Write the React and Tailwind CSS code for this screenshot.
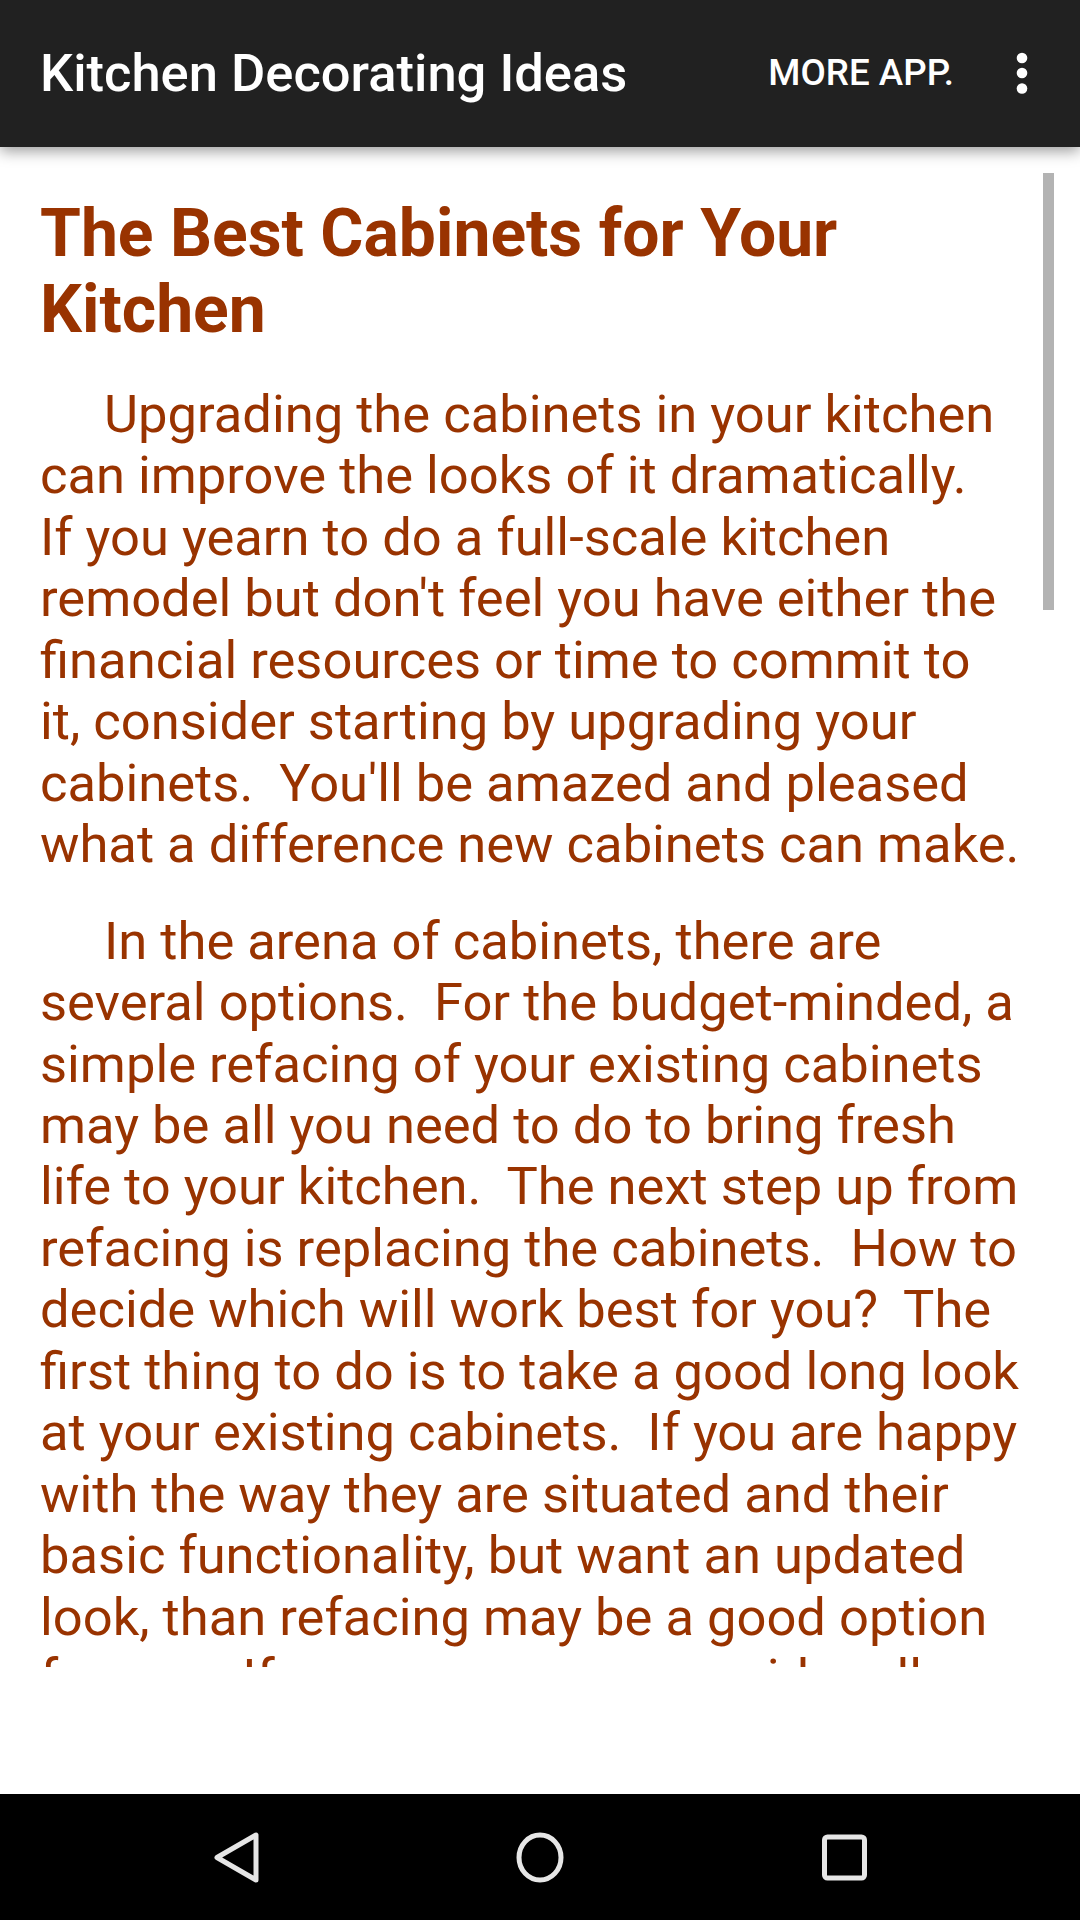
import React from "react";

const P1 = [
  "Upgrading the cabinets in your kitchen",
  "can improve the looks of it dramatically.",
  "If you yearn to do a full-scale kitchen",
  "remodel but don't feel you have either the",
  "financial resources or time to commit to",
  "it, consider starting by upgrading your",
  "cabinets.  You'll be amazed and pleased",
  "what a difference new cabinets can make.",
];

const P2 = [
  "In the arena of cabinets, there are",
  "several options.  For the budget-minded, a",
  "simple refacing of your existing cabinets",
  "may be all you need to do to bring fresh",
  "life to your kitchen.  The next step up from",
  "refacing is replacing the cabinets.  How to",
  "decide which will work best for you?  The",
  "first thing to do is to take a good long look",
  "at your existing cabinets.  If you are happy",
  "with the way they are situated and their",
  "basic functionality, but want an updated",
  "look, than refacing may be a good option",
  "for you.  If you are unsure, consider all",
];

function Lines({ lines }) {
  return lines.map((l, i) => (
    <React.Fragment key={i}>
      {l}
      {i < lines.length - 1 && <br />}
    </React.Fragment>
  ));
}

export default function App() {
  return (
    <div className="w-[1080px] h-[1920px] flex flex-col bg-white font-['Roboto','Liberation_Sans',sans-serif] overflow-hidden">
      <header className="relative z-10 h-[147px] shrink-0 bg-[#212121] flex items-center shadow-[0_4px_14px_rgba(0,0,0,0.4)]">
        <div className="flex-1 pl-[40px] text-white text-[52.5px] font-medium leading-none">
          Kitchen Decorating Ideas
        </div>
        <div className="text-white text-[36.75px] font-medium leading-none mr-[43px]">MORE APP.</div>
        <div className="w-[50px] mr-[33px] flex items-center justify-center">
          <svg width="12" height="44" viewBox="0 0 12 44">
            <circle cx="6" cy="6" r="5.3" fill="#fff" />
            <circle cx="6" cy="21" r="5.3" fill="#fff" />
            <circle cx="6" cy="36.5" r="5.3" fill="#fff" />
          </svg>
        </div>
      </header>

      <main className="relative h-[1520px] shrink-0 overflow-hidden">
        <div className="px-[40px] pt-[49px] text-[#993300]">
          <h1 className="text-[66px] leading-[76px] font-bold mb-[36px] whitespace-pre">
            The Best Cabinets for Your
            <br />
            Kitchen
          </h1>
          <p className="text-[52.5px] leading-[61.45px] whitespace-pre indent-[64px] mb-[35px]">
            <Lines lines={P1} />
          </p>
          <p className="text-[52.5px] leading-[61.45px] whitespace-pre indent-[64px]">
            <Lines lines={P2} />
          </p>
        </div>
        <div className="absolute left-[1043px] top-[26px] w-[11px] h-[437px] bg-[#b3b3b3]" />
      </main>

      <div className="flex-1 bg-white" />

      <nav className="h-[126px] shrink-0 bg-black flex items-center justify-center">
        <svg width="1080" height="126" viewBox="0 1794 1080 126" className="block">
          <polygon
            points="217,1857.5 256,1835 256,1880"
            fill="none"
            stroke="#e6e6e6"
            strokeWidth="5"
            strokeLinejoin="round"
          />
          <ellipse cx="540" cy="1857.5" rx="21" ry="22.5" fill="none" stroke="#e6e6e6" strokeWidth="5" />
          <rect x="824.5" y="1837" width="40" height="41" rx="3" fill="none" stroke="#e6e6e6" strokeWidth="5" />
        </svg>
      </nav>
    </div>
  );
}
